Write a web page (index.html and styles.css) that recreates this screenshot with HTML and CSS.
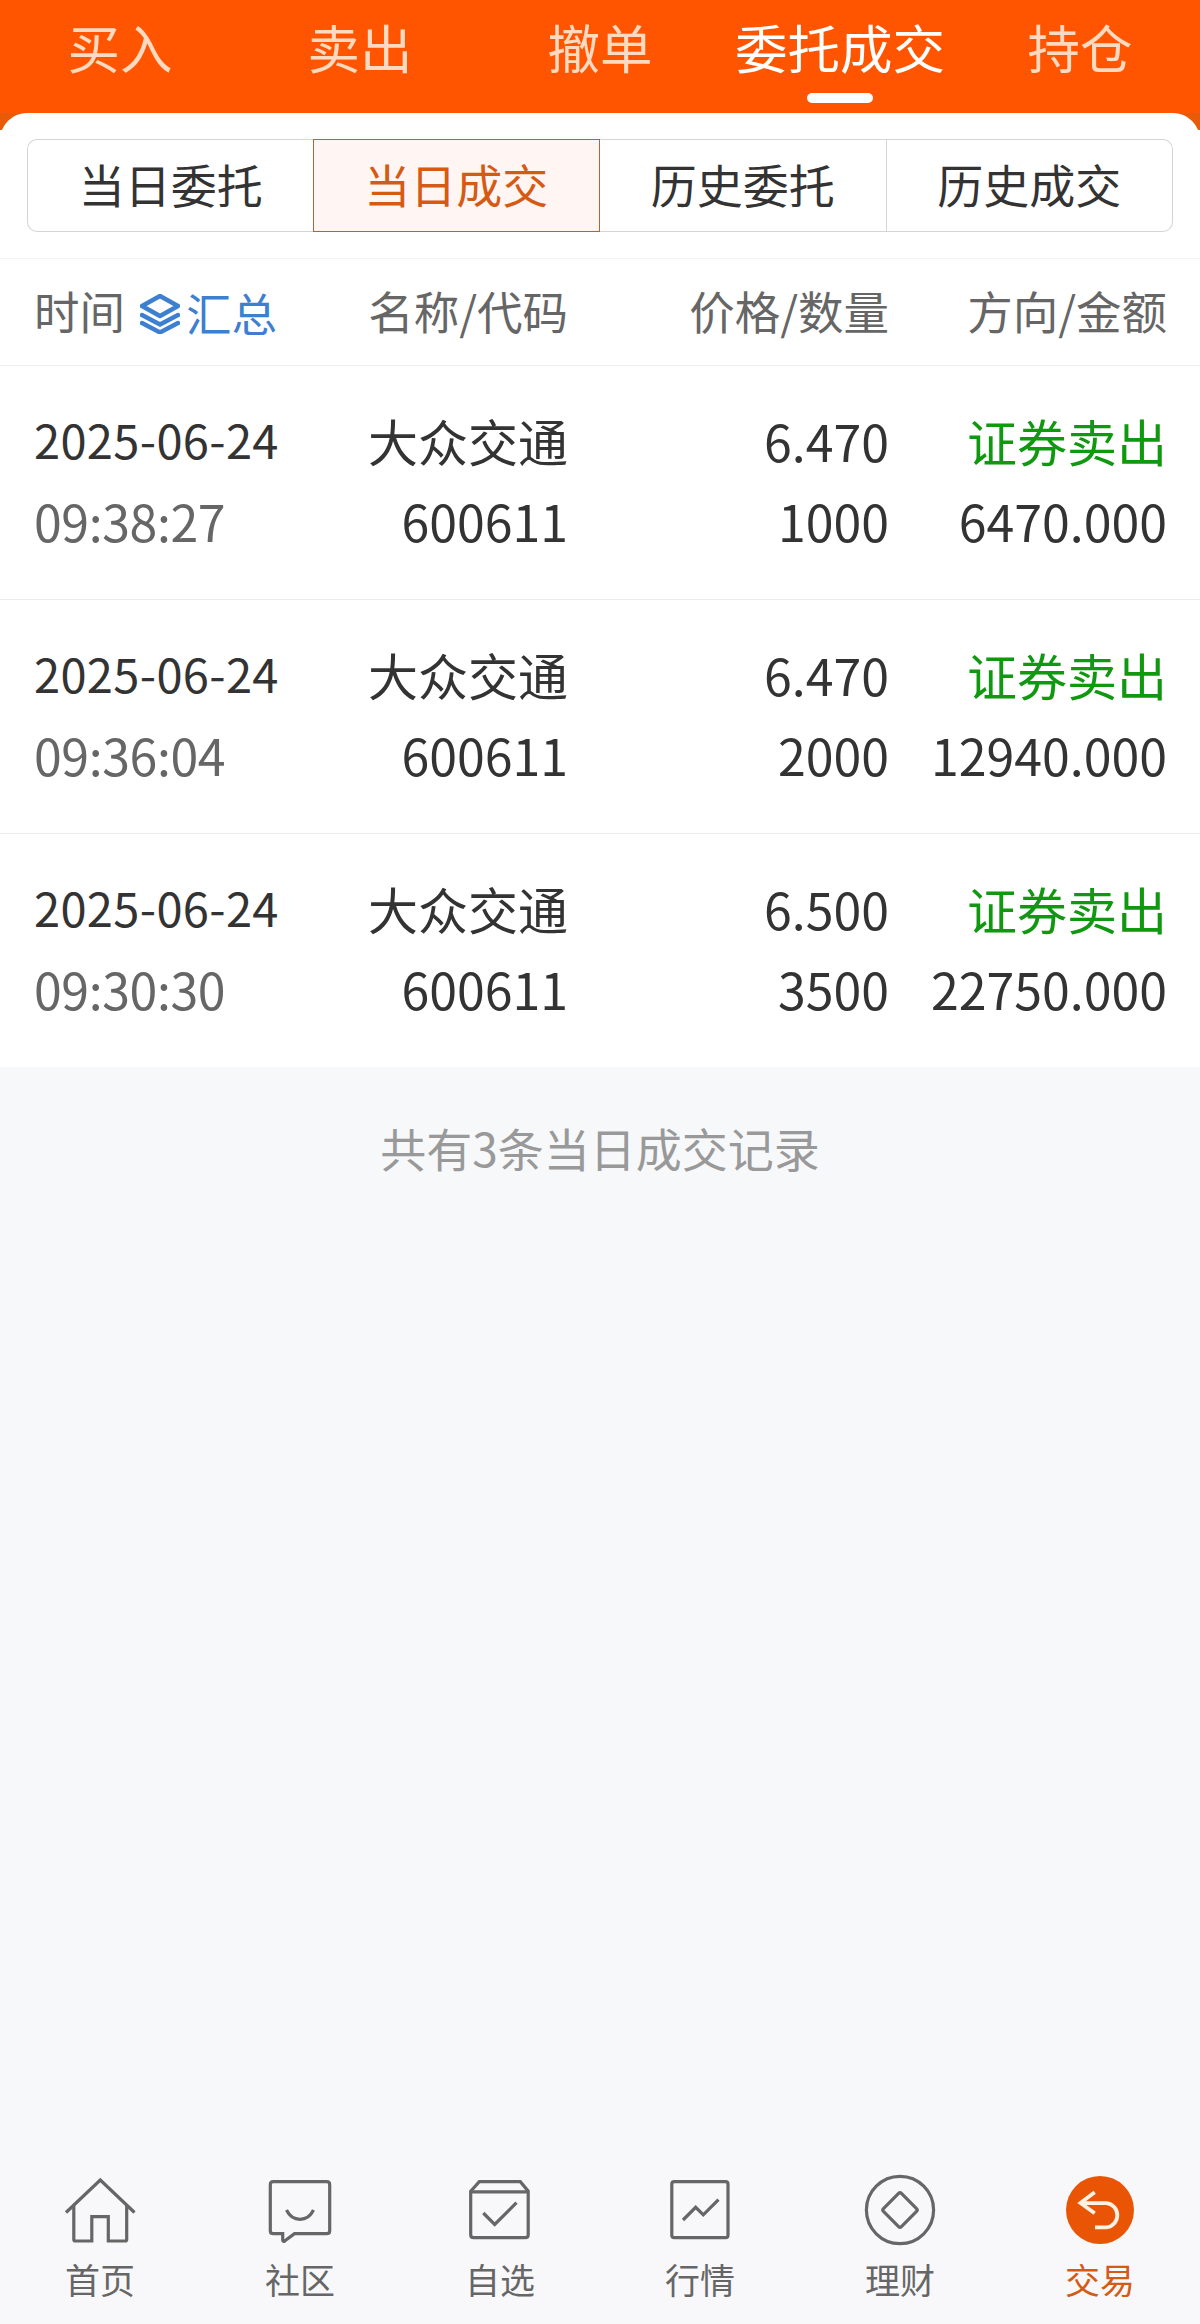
FILE: index.html
```html
<!DOCTYPE html>
<html lang="zh-CN">
<head>
  <meta charset="UTF-8">
  <title>当日成交</title>
  <link rel="stylesheet" href="styles.css">
</head>
<body>

  <nav class="top-tabs">
    <a class="tab">买入</a>
    <a class="tab">卖出</a>
    <a class="tab">撤单</a>
    <a class="tab active">委托成交</a>
    <a class="tab">持仓</a>
  </nav>

  <main>
    <div class="panel-wrap">
      <div class="panel">
        <div class="segments">
          <a class="segment">当日委托</a>
          <a class="segment active">当日成交</a>
          <a class="segment">历史委托</a>
          <a class="segment">历史成交</a>
        </div>
      </div>
    </div>

    <section class="list">
      <div class="list-head">
        <div class="time">时间
          <span class="summary">
            <svg class="layers" viewBox="0 0 40 40">
              <path d="M20 2 L38 12 L20 22 L2 12 Z"/>
              <path d="M2 21 L20 30.5 L38 21"/>
              <path d="M2 29 L20 38.5 L38 29"/>
            </svg>汇总</span>
        </div>
        <div class="name">名称/代码</div>
        <div class="price">价格/数量</div>
        <div class="amount">方向/金额</div>
      </div>

      <div class="row">
        <div class="time"><p class="date">2025-06-24</p><p class="clock">09:38:27</p></div>
        <div class="name"><p>大众交通</p><p class="code">600611</p></div>
        <div class="price"><p>6.470</p><p>1000</p></div>
        <div class="amount"><p class="sell">证券卖出</p><p>6470.000</p></div>
      </div>
      <div class="row">
        <div class="time"><p class="date">2025-06-24</p><p class="clock">09:36:04</p></div>
        <div class="name"><p>大众交通</p><p class="code">600611</p></div>
        <div class="price"><p>6.470</p><p>2000</p></div>
        <div class="amount"><p class="sell">证券卖出</p><p>12940.000</p></div>
      </div>
      <div class="row">
        <div class="time"><p class="date">2025-06-24</p><p class="clock">09:30:30</p></div>
        <div class="name"><p>大众交通</p><p class="code">600611</p></div>
        <div class="price"><p>6.500</p><p>3500</p></div>
        <div class="amount"><p class="sell">证券卖出</p><p>22750.000</p></div>
      </div>
    </section>

    <p class="total">共有3条当日成交记录</p>
  </main>

  <footer class="bottom-nav">
    <a class="nav-item">
      <svg viewBox="0 0 80 80">
        <path d="M6 42.5 L40.3 10 L74.5 42.5"/>
        <path d="M13.8 36 V69.5 Q13.8 71 15.3 71 H31.8 V46.7 H48.3 V71 H65.2 Q66.7 71 66.7 69.5 V36"/>
      </svg>
      <span>首页</span>
    </a>
    <a class="nav-item">
      <svg viewBox="0 0 80 80">
        <path d="M13.3 11.7 H66.7 Q69.7 11.7 69.7 14.7 V60.7 Q69.7 63.7 66.7 63.7 H34.5 L25 70.8 Q22.7 72.3 22.7 70 V63.7 H13.3 Q10.3 63.7 10.3 60.7 V14.7 Q10.3 11.7 13.3 11.7 Z"/>
        <path d="M26.5 40 Q31 49.3 40 49.3 Q49 49.3 53.5 40"/>
      </svg>
      <span>社区</span>
    </a>
    <a class="nav-item">
      <svg viewBox="0 0 80 80">
        <path d="M10.7 21.2 L19.3 11.7 H60.3 L68.2 21.2 V64.7 Q68.2 67.7 65.2 67.7 H13.7 Q10.7 67.7 10.7 64.7 Z"/>
        <path d="M10.7 21.8 H68.2"/>
        <path d="M23.3 43 L34.7 54.5 L56.5 32.7"/>
      </svg>
      <span>自选</span>
    </a>
    <a class="nav-item">
      <svg viewBox="0 0 80 80">
        <rect x="11.8" y="11.7" width="56.2" height="56" rx="2.5"/>
        <path d="M23 50 L35.7 37.3 L43.3 44.8 L58.5 29.7"/>
      </svg>
      <span>行情</span>
    </a>
    <a class="nav-item">
      <svg viewBox="0 0 80 80">
        <circle cx="40" cy="40" r="33.6"/>
        <rect x="27.3" y="27.3" width="25.4" height="25.4" rx="2" transform="rotate(45 40 40)"/>
      </svg>
      <span>理财</span>
    </a>
    <a class="nav-item active">
      <svg viewBox="0 0 80 80">
        <circle class="disc" cx="40" cy="40" r="34"/>
        <path class="arrow" d="M34.7 22.3 L20.5 33 L34.7 43.3 M20.5 33.2 H46.3 A12.1 12.1 0 0 1 46.3 57.3 H35"/>
      </svg>
      <span>交易</span>
    </a>
  </footer>

</body>
</html>
```

FILE: styles.css
```css
/* Base Styles */
* {
  margin: 0;
  padding: 0;
  box-sizing: border-box;
}

body {
  display: flex;
  flex-direction: column;
  height: 2324px;
  font-family: "Noto Sans CJK SC", sans-serif;
  background-color: #f7f8fa;
  color: #333;
}

/* Top tabs */
.top-tabs {
  display: grid;
  grid-template-columns: repeat(5, 1fr);
  height: 113px;
  background-color: #ff5500;
}

.tab {
  display: flex;
  flex-direction: column;
  align-items: center;
  font-size: 52.5px;
  line-height: 93px;
  color: #ffd9c0;
}

.tab.active {
  color: #fff;
}

.tab.active::after {
  content: "";
  width: 66px;
  height: 10px;
  border-radius: 5px;
  background-color: #fff;
}

/* Segmented control */
.panel-wrap {
  background: linear-gradient(#e85a05 17px, #fff 17px);
}

.panel {
  padding: 26px 27px;
  background-color: #fff;
  border-radius: 27px 27px 0 0;
}

.segments {
  display: grid;
  grid-template-columns: repeat(4, 1fr);
  height: 93px;
}

.segment {
  border: 1px solid #d3d6d7;
  border-left-width: 0;
  font-size: 46px;
  line-height: 86px;
  text-align: center;
}

.segment:first-child {
  border-left-width: 1px;
  border-right-width: 0;
  border-radius: 10px 0 0 10px;
}

.segment:last-child {
  border-radius: 0 10px 10px 0;
}

.segment.active {
  margin-left: -1px;
  border: 1px solid #b3633c;
  background-color: #fff6f3;
  color: #d55b15;
}

/* Deal list */
.list {
  background-color: #fff;
  border-top: 1px solid #f3f3f3;
}

.list-head,
.row {
  display: grid;
  grid-template-columns: 320px 214px 321px 278px;
  padding: 0 33px 0 34px;
  border-bottom: 1px solid #ececec;
}

.list-head {
  height: 107px;
  font-size: 45.5px;
  line-height: 103px;
  color: #666;
}

.row {
  height: 234px;
  padding-top: 34px;
  font-size: 50px;
  line-height: 80px;
}

.row:last-child {
  height: 233px;
  border-bottom: none;
}

.time {
  display: flex;
}

.row .time {
  flex-direction: column;
}

.name {
  text-align: right;
}

.price,
.amount {
  text-align: right;
}

.summary {
  display: flex;
  align-items: center;
  margin-left: 15px;
  color: #3d7fd0;
}

.layers {
  width: 40px;
  height: 40px;
  margin: 3px 6px 0 0;
  fill: none;
  stroke: #3d7fd0;
  stroke-width: 4.4;
  stroke-linejoin: round;
  stroke-linecap: round;
}

.date {
  font-size: 47px;
  line-height: 78px;
  margin-bottom: 2px;
  letter-spacing: 0.35px;
}

.clock {
  letter-spacing: -0.4px;
  color: #666;
}

.sell {
  color: #109810;
}

.total {
  font-size: 46px;
  line-height: 161px;
  text-align: center;
  color: #999;
}

/* Bottom navigation */
.bottom-nav {
  display: grid;
  grid-template-columns: repeat(6, 1fr);
  margin-top: auto;
  padding: 10px 0 17px;
  background-color: #f8f8fb;
}

.nav-item {
  display: flex;
  flex-direction: column;
  align-items: center;
  font-size: 35px;
  line-height: 57px;
  color: #666;
}

.nav-item svg {
  width: 80px;
  height: 80px;
  fill: none;
  stroke: #666;
  stroke-width: 3.2;
}

.nav-item.active {
  color: #d55b15;
}

.nav-item .disc {
  fill: #e95504;
  stroke: none;
}

.nav-item .arrow {
  stroke: #fff1e4;
  stroke-width: 3.8;
}
```
